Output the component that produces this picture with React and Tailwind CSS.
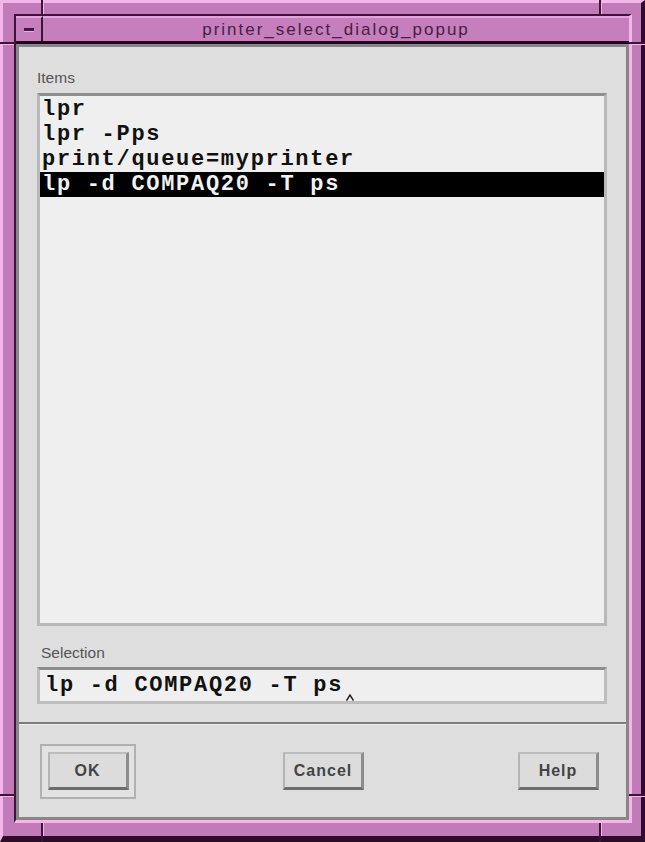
import React from "react";

const items = ["lpr", "lpr -Pps", "print/queue=myprinter", "lp -d COMPAQ20 -T ps"];

function Btn({ label }) {
  return (
    <div className="w-[81px] h-[38px] flex items-center justify-center bg-[#dcdcdc] border-t-2 border-l-2 border-t-[#bdbdbd] border-l-[#b4b4b4] border-r-[3px] border-b-[3px] border-r-[#8c8c8c] border-b-[#6c6c6c] font-['Liberation_Sans',sans-serif] font-bold text-[16px] tracking-[1px] text-[#444444]">
      {label}
    </div>
  );
}

export default function App() {
  const mono = "font-['Liberation_Mono',monospace] font-bold text-[22px] tracking-[1.7px]";
  return (
    <div className="relative w-[645px] h-[842px] overflow-hidden">
      <div className="w-full h-full flex bg-[#c07bb8] border-t-[3px] border-l-[3px] border-t-[#f2b6ea] border-l-[#f2b6ea] border-r-[4px] border-b-[6px] border-r-[#2c0c2a] border-b-[#2c0c2a] pt-[11px] pl-[11px] pr-[9px] pb-[13px]">
        <div className="flex-1 flex flex-col border-t-2 border-l-2 border-t-[#3c1438] border-l-[#3c1438] border-r-[3px] border-b-[3px] border-r-[#f2b6ea] border-b-[#f2b6ea]">
          {/* title bar */}
          <div className="h-[28px] flex border-b-[3px] border-b-[#1c0a1a] bg-[#c47fbc]">
            <div className="w-[27px] flex items-center justify-center border-r-2 border-r-[#3c1438] border-t-2 border-t-[#e2a4da]">
              <div className="w-[10px] h-[4px] bg-[#4a1846] border-t border-t-[#3a1036] border-b border-b-[#e6aee0]" />
            </div>
            <div className="flex-1 flex items-center justify-center border-t-2 border-t-[#e2a4da] font-['Liberation_Sans',sans-serif] text-[17px] tracking-[2px] text-[#4a1c46] leading-none pb-[1px]">
              printer_select_dialog_popup
            </div>
          </div>
          {/* client */}
          <div className="flex-1 flex flex-col bg-[#dedede] border-[3px] border-[#878787]">
            <div className="pt-[23px] pl-[18px] pr-[19px] flex flex-col">
              <div className="font-['Liberation_Sans',sans-serif] text-[15.5px] leading-[16px] text-[#555555]">Items</div>
              <div className="mt-[7px] h-[533px] border-[3px] border-[#b9b9b9] border-t-[#8f8f8f] bg-[#efefef] pt-[1px]">
                {items.map((t, i) => (
                  <div
                    key={t}
                    className={
                      "h-[25px] leading-[25px] pl-[2px] whitespace-pre " +
                      mono +
                      (i === 3 ? " bg-black text-[#f2f2f2]" : " text-[#111111]")
                    }
                  >
                    {t}
                  </div>
                ))}
              </div>
              <div className="mt-[19px] font-['Liberation_Sans',sans-serif] text-[15.5px] leading-[16px] text-[#555555] pl-[4px]">Selection</div>
              <div className="relative mt-[6px] h-[37px] flex items-center border-[3px] border-[#bdbdbd] border-t-[#8c8c8c] bg-[#efefef] pl-[5px]">
                <div className={"h-[24px] leading-[24px] whitespace-pre text-[#111111] " + mono}>lp -d COMPAQ20 -T ps</div>
                <svg className="absolute left-[306px] top-[24px]" width="8" height="7" viewBox="0 0 8 7">
                  <path d="M0.5 6.5 L4 1 L7.5 6.5" fill="none" stroke="#222" strokeWidth="1.5" />
                </svg>
              </div>
            </div>
            <div className="mt-[18px] h-[3px] border-t-2 border-t-[#7c7c7c] border-b border-b-[#f0f0f0]" />
            <div className="flex-1 flex items-center pl-[21px]">
              <div className="w-[96px] h-[55px] flex items-center justify-center border-2 border-[#b0b0b0] bg-[#e2e2e2]">
                <Btn label="OK" />
              </div>
              <div className="ml-[147px]">
                <Btn label="Cancel" />
              </div>
              <div className="ml-[154px]">
                <Btn label="Help" />
              </div>
            </div>
          </div>
        </div>
      </div>
      {/* frame resize marks */}
      <div className="absolute left-[41px] top-0 w-[2px] h-[16px] bg-[#3c1438]" />
      <div className="absolute left-[43px] top-0 w-[1px] h-[14px] bg-[#f2b6ea]" />
      <div className="absolute left-[599px] top-0 w-[2px] h-[16px] bg-[#3c1438]" />
      <div className="absolute left-[601px] top-0 w-[1px] h-[14px] bg-[#f2b6ea]" />
      <div className="absolute left-[41px] top-[823px] w-[2px] h-[19px] bg-[#3c1438]" />
      <div className="absolute left-[43px] top-[823px] w-[1px] h-[13px] bg-[#f2b6ea]" />
      <div className="absolute left-[599px] top-[823px] w-[2px] h-[19px] bg-[#3c1438]" />
      <div className="absolute left-[601px] top-[823px] w-[1px] h-[13px] bg-[#f2b6ea]" />
      <div className="absolute left-0 top-[42px] w-[16px] h-[2px] bg-[#3c1438]" />
      <div className="absolute left-0 top-[44px] w-[14px] h-[1px] bg-[#f2b6ea]" />
      <div className="absolute left-0 top-[794px] w-[16px] h-[2px] bg-[#3c1438]" />
      <div className="absolute left-0 top-[796px] w-[14px] h-[1px] bg-[#f2b6ea]" />
      <div className="absolute left-[629px] top-[42px] w-[16px] h-[2px] bg-[#3c1438]" />
      <div className="absolute left-[632px] top-[44px] w-[13px] h-[1px] bg-[#f2b6ea]" />
      <div className="absolute left-[629px] top-[794px] w-[16px] h-[2px] bg-[#3c1438]" />
      <div className="absolute left-[632px] top-[796px] w-[13px] h-[1px] bg-[#f2b6ea]" />
    </div>
  );
}
